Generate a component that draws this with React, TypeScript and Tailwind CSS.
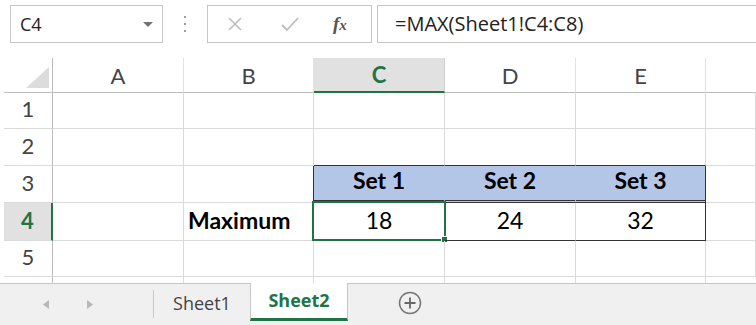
import React from "react";

const cellFont = { fontFamily: "Lato, 'Liberation Sans', sans-serif" };
const uiFont = { fontFamily: "'Open Sans', 'Noto Sans', sans-serif" };

function TopBar() {
  return (
    <div className="flex h-[58px] items-start pt-[5px]" style={uiFont}>
      <div className="ml-[10px] flex h-[38px] w-[153px] items-center justify-between border border-[#c6c6c6] pl-[9px] pr-[9px]">
        <span className="text-[18px] text-[#222]">C4</span>
        <svg width="10" height="5" viewBox="0 0 10 5">
          <polygon points="0,0 10,0 5,5" fill="#707070" />
        </svg>
      </div>
      <div className="ml-[21px] flex h-[38px] flex-col items-center justify-center gap-[5px]">
        <div className="h-[2px] w-[2px] bg-[#a0a0a0]" />
        <div className="h-[2px] w-[2px] bg-[#a0a0a0]" />
        <div className="h-[2px] w-[2px] bg-[#a0a0a0]" />
      </div>
      <div className="ml-[21px] flex h-[38px] w-[165px] items-center border border-[#c6c6c6]">
        <svg className="ml-[17px]" width="20" height="20" viewBox="0 0 20 20">
          <path d="M4 4 L16 16 M16 4 L4 16" stroke="#bdbdbd" strokeWidth="1.6" fill="none" />
        </svg>
        <svg className="ml-[35px]" width="20" height="20" viewBox="0 0 20 20">
          <path d="M2 11 L7 16 L18 4" stroke="#bdbdbd" strokeWidth="1.8" fill="none" />
        </svg>
        <span
          className="ml-[33px] text-[19px] font-bold italic text-[#555]"
          style={{ fontFamily: "'Liberation Serif', serif" }}
        >
          f<span className="text-[15px]">x</span>
        </span>
      </div>
      <div className="ml-[5px] flex h-[38px] flex-1 items-center border-y border-l border-[#c6c6c6] pl-[17px]">
        <span className="text-[20px] text-[#222]">=MAX(Sheet1!C4:C8)</span>
      </div>
    </div>
  );
}

function ColHeader({ label, active }: { label: string; active?: boolean }) {
  if (active) {
    return (
      <div className="flex items-center justify-center border-b-2 border-r border-b-[#217346] border-r-[#d0d0d0] bg-[#e1e1e1] text-[22px] font-bold text-[#217346]">
        {label}
      </div>
    );
  }
  return (
    <div className="flex items-center justify-center border-b border-r border-b-[#bdbdbd] border-r-[#e0e0e0] text-[22px] text-[#444]">
      {label}
    </div>
  );
}

function RowHeader({ n, active }: { n: number; active?: boolean }) {
  if (active) {
    return (
      <div className="flex items-end justify-center border-b border-r-2 border-b-[#dadada] border-r-[#217346] bg-[#e1e1e1] pb-[3px] text-[22px] font-bold text-[#217346]">
        {n}
      </div>
    );
  }
  return (
    <div className="flex items-end justify-center border-b border-r border-b-[#dadada] border-r-[#bdbdbd] pb-[3px] text-[22px] text-[#444]">
      {n}
    </div>
  );
}

function Cell({ className = "", children }: { className?: string; children?: React.ReactNode }) {
  return <div className={"relative flex items-end pb-[3px] text-[23px] text-black " + className}>{children}</div>;
}

const std = "border-b border-r border-[#dadada]";

function Grid() {
  return (
    <div
      className="grid grid-cols-[49px_131px_130px_131px_131px_130px_1fr] grid-rows-[35px_36px_37px_37px_38px_36px_6px] pl-[4px]"
      style={cellFont}
    >
      {/* header row */}
      <div className="flex items-end justify-end border-b border-r border-[#bdbdbd] pb-[4px] pr-[3px]">
        <svg width="23" height="21" viewBox="0 0 23 21">
          <polygon points="0,21 23,21 23,0" fill="#dcdcdc" />
        </svg>
      </div>
      <ColHeader label="A" />
      <ColHeader label="B" />
      <ColHeader label="C" active />
      <ColHeader label="D" />
      <ColHeader label="E" />
      <div className="border-b border-b-[#bdbdbd]" />

      {/* row 1 */}
      <RowHeader n={1} />
      <Cell className={std} />
      <Cell className={std} />
      <Cell className={std} />
      <Cell className={std} />
      <Cell className={std} />
      <Cell className={std} />

      {/* row 2 */}
      <RowHeader n={2} />
      <Cell className={std} />
      <Cell className={std} />
      <Cell className="border-b border-r border-b-[#333] border-r-[#dadada]" />
      <Cell className="border-b border-r border-b-[#333] border-r-[#dadada]" />
      <Cell className="border-b border-r border-b-[#333] border-r-[#dadada]" />
      <Cell className={std} />

      {/* row 3 */}
      <RowHeader n={3} />
      <Cell className={std} />
      <Cell className="border-b border-r border-b-[#dadada] border-r-[#333]" />
      <Cell className="justify-center border-b-[3px] border-r border-double border-b-[#333] border-r-[#b4c6e7] bg-[#b4c6e7] pb-[2px] font-bold">
        Set 1
      </Cell>
      <Cell className="justify-center border-b-[3px] border-r border-double border-b-[#333] border-r-[#b4c6e7] bg-[#b4c6e7] pb-[2px] font-bold">
        Set 2
      </Cell>
      <Cell className="justify-center border-b-[3px] border-r border-double border-b-[#333] border-r-[#333] bg-[#b4c6e7] pb-[2px] font-bold">
        Set 3
      </Cell>
      <Cell className={std} />

      {/* row 4 */}
      <RowHeader n={4} active />
      <Cell className={std} />
      <Cell className="border-b border-r border-b-[#dadada] border-r-[#333] pl-[4px] font-bold">Maximum</Cell>
      <Cell className="justify-center border-b border-r border-b-[#333] border-r-[#dadada]">
        18
        <div className="pointer-events-none absolute -bottom-px -left-[2px] -right-[2px] -top-[2px] border-2 border-[#217346]">
          <div className="absolute -bottom-[4px] -right-[4px] h-[7px] w-[7px] border border-white bg-[#217346]" />
        </div>
      </Cell>
      <Cell className="justify-center border-b border-r border-b-[#333] border-r-[#dadada]">24</Cell>
      <Cell className="justify-center border-b border-r border-[#333]">32</Cell>
      <Cell className={std} />

      {/* row 5 */}
      <RowHeader n={5} />
      <Cell className={std} />
      <Cell className={std} />
      <Cell className={std} />
      <Cell className={std} />
      <Cell className={std} />
      <Cell className={std} />

      {/* row 6 partial */}
      <div className="border-r border-[#bdbdbd]" />
      <div className="border-r border-[#dadada]" />
      <div className="border-r border-[#dadada]" />
      <div className="border-r border-[#dadada]" />
      <div className="border-r border-[#dadada]" />
      <div className="border-r border-[#dadada]" />
      <div />
    </div>
  );
}

function TabBar() {
  return (
    <div className="flex h-[42px] border-t border-[#c6c6c6] bg-[#f0f0f0]" style={uiFont}>
      <div className="flex w-[153px] items-center">
        <svg className="ml-[43px]" width="6" height="9" viewBox="0 0 6 9">
          <polygon points="6,0 6,9 0,4.5" fill="#b8b8b8" />
        </svg>
        <svg className="ml-[38px]" width="6" height="9" viewBox="0 0 6 9">
          <polygon points="0,0 0,9 6,4.5" fill="#b8b8b8" />
        </svg>
      </div>
      <div className="mt-[6px] h-[28px] w-px bg-[#c6c6c6]" />
      <div className="flex w-[96px] items-center justify-center pb-[3px] text-[18px] text-[#444]">Sheet1</div>
      <div className="-mt-px flex h-[38px] w-[98px] items-center justify-center border-x border-b-[3px] border-x-[#c6c6c6] border-b-[#217346] bg-white text-[18px] font-bold text-[#217346]">
        Sheet2
      </div>
      <div className="ml-[50px] mt-[7px]">
        <svg width="24" height="24" viewBox="0 0 24 24">
          <circle cx="12" cy="12" r="10.5" fill="none" stroke="#777" strokeWidth="1.5" />
          <path d="M12 6.5 V17.5 M6.5 12 H17.5" stroke="#666" strokeWidth="1.8" />
        </svg>
      </div>
    </div>
  );
}

export default function App() {
  return (
    <div className="h-[325px] w-[756px] overflow-hidden bg-white">
      <TopBar />
      <Grid />
      <TabBar />
    </div>
  );
}
